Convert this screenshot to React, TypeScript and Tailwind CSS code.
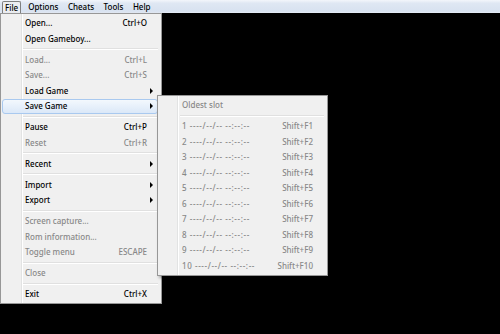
import React from "react";

type Entry =
  | { sep: true }
  | {
      sep?: false;
      label: string;
      shortcut?: string;
      disabled?: boolean;
      submenu?: boolean;
      active?: boolean;
      wide?: boolean;
    };

const fileMenu: Entry[] = [
  { label: "Open...", shortcut: "Ctrl+O" },
  { label: "Open Gameboy..." },
  { sep: true },
  { label: "Load...", shortcut: "Ctrl+L", disabled: true },
  { label: "Save...", shortcut: "Ctrl+S", disabled: true },
  { label: "Load Game", submenu: true },
  { label: "Save Game", submenu: true, active: true },
  { sep: true },
  { label: "Pause", shortcut: "Ctrl+P" },
  { label: "Reset", shortcut: "Ctrl+R", disabled: true },
  { sep: true },
  { label: "Recent", submenu: true },
  { sep: true },
  { label: "Import", submenu: true },
  { label: "Export", submenu: true },
  { sep: true },
  { label: "Screen capture...", disabled: true },
  { label: "Rom information...", disabled: true },
  { label: "Toggle menu", shortcut: "ESCAPE", disabled: true },
  { sep: true },
  { label: "Close", disabled: true },
  { sep: true },
  { label: "Exit", shortcut: "Ctrl+X" },
];

const saveMenu: Entry[] = [
  { label: "Oldest slot", disabled: true },
  { sep: true },
  ...Array.from({ length: 10 }, (_, i) => ({
    label: `${i + 1} ----/--/-- --:--:--`,
    shortcut: `Shift+F${i + 1}`,
    disabled: true,
    wide: true,
  })),
];

function Arrow() {
  return (
    <svg width="3" height="6" viewBox="0 0 3 6">
      <path d="M0 0 L3 3 L0 6 Z" fill="#000" />
    </svg>
  );
}

function MenuRows({ items }: { items: Entry[] }) {
  return (
    <>
      {items.map((it, i) => {
        if (it.sep) {
          return (
            <div key={i} className="ml-[22px] mr-[3px] flex h-[5.5px] flex-col justify-center">
              <div className="h-px bg-[#e0e0e0]" />
              <div className="h-px bg-white" />
            </div>
          );
        }
        return (
          <div
            key={i}
            className={`ml-[1px] mr-[3px] flex h-[15.5px] items-center rounded-[3px] border pl-[22px] ${
              it.active
                ? "border-[#a9c9ef] bg-[linear-gradient(to_bottom,#f3f8fd,#dbe8f8)]"
                : "border-transparent"
            } ${it.disabled ? "text-[#888888]" : "text-black"}`}
          >
            <span className={`flex-1 whitespace-nowrap ${it.wide ? "tracking-[0.6px]" : ""}`}>
              {it.label}
            </span>
            {it.shortcut && <span className="whitespace-nowrap">{it.shortcut}</span>}
            <span className="flex w-[10px] items-center pl-[3px]">{it.submenu && <Arrow />}</span>
          </div>
        );
      })}
    </>
  );
}

export default function App() {
  return (
    <div className="flex h-[334px] w-[500px] flex-col overflow-hidden font-['Noto_Sans',sans-serif] text-[8px] font-medium leading-none">
      {/* menu bar */}
      <div className="flex h-[13px] items-stretch pl-[2px] pt-[1px] bg-[linear-gradient(to_bottom,#f3f6fb_0%,#dfe7f3_25%,#d8e2f0_85%,#e6ecf6_100%)]">
        <div className="flex items-center rounded-t-[2px] border border-b-0 border-[#7f8080] bg-[#eceef2] px-[2px] text-black">
          File
        </div>
        <div className="ml-[7px] flex items-center gap-[9.5px] text-black">
          <span>Options</span>
          <span>Cheats</span>
          <span>Tools</span>
          <span>Help</span>
        </div>
      </div>

      {/* emulator screen */}
      <div className="relative flex-1 bg-black">
        <div className="absolute left-0 top-0 w-[162px] border border-[#979797] pb-[1px] pt-[1.5px] shadow-[2px_2px_3px_rgba(0,0,0,0.35)] bg-[linear-gradient(to_right,#f0f0f0_20px,#e2e3e3_20px,#e2e3e3_21px,#ffffff_21px,#ffffff_22px,#f0f0f0_22px)]">
          <MenuRows items={fileMenu} />
        </div>
        <div className="absolute left-[157px] top-[82px] w-[171px] border border-[#979797] pb-[1px] pt-[1.5px] shadow-[2px_2px_3px_rgba(0,0,0,0.35)] bg-[linear-gradient(to_right,#f0f0f0_19px,#e2e3e3_19px,#e2e3e3_20px,#ffffff_20px,#ffffff_21px,#f0f0f0_21px)]">
          <MenuRows items={saveMenu} />
        </div>
      </div>
    </div>
  );
}
